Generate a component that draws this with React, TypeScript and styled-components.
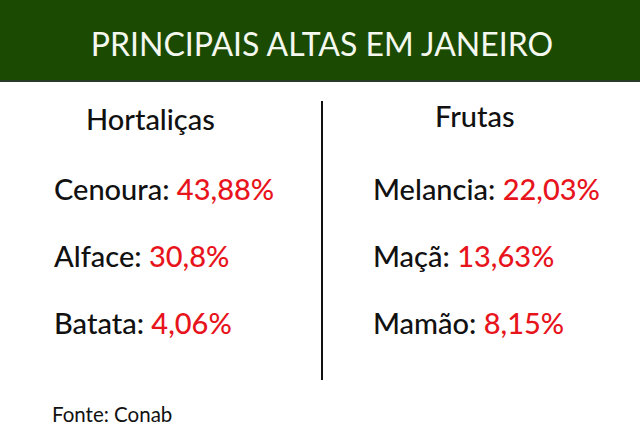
import styled, { createGlobalStyle } from "styled-components";

const GlobalStyle = createGlobalStyle`
  html, body {
    margin: 0;
    padding: 0;
    background: #ffffff;
  }
  body {
    font-family: Lato, "Noto Sans", sans-serif;
  }
`;

type Item = { name: string; value: string };

const hortalicas: Item[] = [
  { name: "Cenoura", value: "43,88%" },
  { name: "Alface", value: "30,8%" },
  { name: "Batata", value: "4,06%" },
];

const frutas: Item[] = [
  { name: "Melancia", value: "22,03%" },
  { name: "Maçã", value: "13,63%" },
  { name: "Mamão", value: "8,15%" },
];

const App = () => {
  return (
    <>
      <GlobalStyle />
      <Page>
        <Header>
          <Title>PRINCIPAIS ALTAS EM JANEIRO</Title>
        </Header>
        <Body>
          <Column $padLeft={54}>
            <Heading $indent={32} $top={1}>Hortaliças</Heading>
            {hortalicas.map((item) => (
              <Row key={item.name}>
                {item.name}: <Value>{item.value}</Value>
              </Row>
            ))}
          </Column>
          <Divider />
          <Column $padLeft={50}>
            <Heading $indent={62} $top={-2}>Frutas</Heading>
            {frutas.map((item) => (
              <Row key={item.name}>
                {item.name}: <Value>{item.value}</Value>
              </Row>
            ))}
          </Column>
        </Body>
        <Source>Fonte: Conab</Source>
      </Page>
    </>
  );
};

export default App;

const Page = styled.div`
  width: 640px;
  height: 447px;
  display: flex;
  flex-direction: column;
  background: #ffffff;
  overflow: hidden;
`;

const Header = styled.header`
  height: 72px;
  padding-top: 8px;
  background: #1b4a02;
  border-bottom: 2px solid #2a3a2a;
  display: flex;
  align-items: center;
  justify-content: center;
`;

const Title = styled.h1`
  margin: 0;
  padding-left: 4px;
  font-family: Lato, sans-serif;
  font-weight: 400;
  font-size: 32px;
  color: #f4f8ee;
  line-height: 40px;
`;

const Body = styled.main`
  display: flex;
  margin-top: 19px;
  height: 279px;
`;

const Column = styled.section<{ $padLeft: number }>`
  flex: 1;
  display: flex;
  flex-direction: column;
  padding-left: ${(p) => p.$padLeft}px;
`;

const Heading = styled.h2<{ $indent: number; $top: number }>`
  margin: ${(p) => p.$top}px 0 ${(p) => 20 - p.$top}px ${(p) => p.$indent}px;
  font-weight: 500;
  font-size: 29px;
  line-height: 34px;
  color: #111111;
`;

const Row = styled.p`
  margin: 0;
  font-size: 29px;
  font-weight: 500;
  line-height: 67px;
  color: #111111;
  white-space: nowrap;
`;

const Value = styled.span`
  color: #e8141c;
`;

const Divider = styled.div`
  width: 2px;
  background: #111111;
  align-self: stretch;
`;

const Source = styled.footer`
  margin: 22px 0 0 52px;
  font-size: 20.5px;
  line-height: 24px;
  color: #111111;
`;
